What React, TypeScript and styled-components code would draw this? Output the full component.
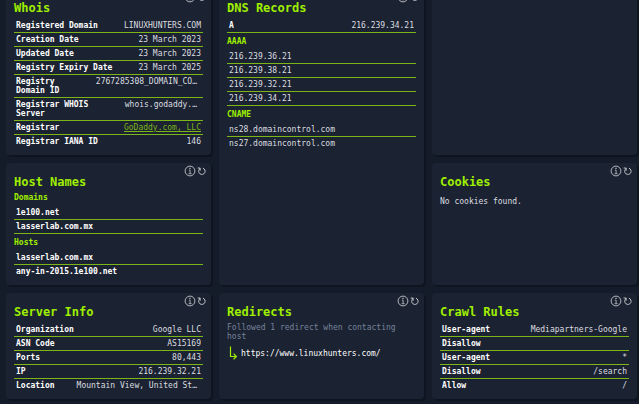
import React from "react";
import styled, { createGlobalStyle } from "styled-components";

const colors = {
  primary: "#9fef00",
  line: "#7cb518",
  background: "#141b29",
  card: "#1b2231",
  shadow: "#0f1520",
  text: "#ffffff",
  value: "#dcdee0",
  muted: "#76829b",
  icon: "#c3c5c8",
};

const GlobalStyle = createGlobalStyle`
  * { box-sizing: border-box; }
  html { background: ${colors.background}; }
  body {
    margin: 0;
    overflow: hidden;
    color: ${colors.text};
    font: 8px/9px "DejaVu Sans Mono", "Liberation Mono", monospace;
  }
`;

const Dashboard = styled.main`
  display: grid;
  grid-template-columns: repeat(3, minmax(0, 1fr));
  gap: 8px;
  margin-top: -11px;
  padding: 0 2px 8px 6px;
`;

const CardBox = styled.section<{ $rows?: number }>`
  position: relative;
  grid-row: span ${(p) => p.$rows ?? 1};
  padding: 13px 8px 7px;
  border-radius: 4px;
  background: ${colors.card};
  box-shadow: 2px 2px 0 ${colors.shadow};
`;

const CardTitle = styled.h2`
  margin: 0;
  color: ${colors.primary};
  font-size: 12px;
  line-height: 13px;
`;

const CardActions = styled.div`
  position: absolute;
  top: 2px;
  right: 4px;
  display: flex;
`;

const IconButton = styled.button`
  display: flex;
  padding: 0;
  border: 0;
  background: none;
  color: ${colors.icon};
  cursor: pointer;
`;

const GroupTitle = styled.h3`
  margin: 0;
  padding: 4px 0;
  color: ${colors.primary};
  font-size: 8px;
  line-height: 9px;
`;

const Pairs = styled.dl`
  margin: 4px 0 0;
`;

const PairRow = styled.div<{ $ruled?: boolean }>`
  display: flex;
  justify-content: space-between;
  gap: 12px;
  padding: 2px;
  border-bottom: 1px solid ${colors.line};

  &:last-child {
    border-bottom-width: ${(p) => (p.$ruled ? "1px" : "0")};
  }
`;

const Label = styled.dt`
  font-weight: bold;
`;

const Value = styled.dd<{ $shortened?: boolean }>`
  flex: none;
  margin: 0;
  padding-right: ${(p) => (p.$shortened ? "4px" : "0")};
  color: ${colors.value};
  white-space: nowrap;
`;

const ValueLink = styled.a`
  color: ${colors.line};
`;

const List = styled.ul<{ $bold?: boolean; $ruled?: boolean }>`
  margin: 0;
  padding: 0;
  list-style: none;
  color: ${(p) => (p.$bold ? colors.text : colors.value)};
  font-weight: ${(p) => (p.$bold ? "bold" : "normal")};

  li {
    padding: 2px;
    border-bottom: 1px solid ${colors.line};
  }

  li:last-child {
    border-bottom-width: ${(p) => (p.$ruled ? "1px" : "0")};
  }
`;

const Note = styled.p<{ $muted?: boolean }>`
  margin: 0;
  padding-top: ${(p) => (p.$muted ? "4px" : "8px")};
  color: ${(p) => (p.$muted ? colors.muted : colors.value)};
`;

const Redirect = styled.div`
  display: flex;
  align-items: center;
  gap: 3px;
  padding: 5px 2px;

  a {
    color: ${colors.text};
    text-decoration: none;
  }
`;

const InfoIcon = () => (
  <svg width="12" height="12" viewBox="0 0 12 12" fill="none" stroke="currentColor" aria-hidden="true">
    <circle cx="6" cy="6" r="4.9" strokeWidth="0.9" />
    <path d="M4.9 5.1h1.2v3.5M4.6 8.7h3" strokeWidth="0.8" />
    <path d="M6 2.8v1.2" strokeWidth="1.2" />
  </svg>
);

const RefreshIcon = () => (
  <svg width="11" height="12" viewBox="0 0 11 12" fill="none" stroke="currentColor" aria-hidden="true">
    <path d="M6.9 3.2A3.2 3.2 0 1 1 3.6 4V3.2" strokeWidth="1" />
    <path d="M1.6 3H4.2V5.8" strokeWidth="0.9" />
  </svg>
);

const RedirectArrow = () => (
  <svg width="9" height="14" viewBox="0 0 9 14" fill="none" stroke={colors.primary} aria-hidden="true">
    <path d="M1.5 0.5V10.5H7M4.6 7.6L7.4 10.5L4.6 13.2" strokeWidth="1.2" />
  </svg>
);

type CardProps = { title: string; rows?: number; children?: React.ReactNode };

const Card = ({ title, rows, children }: CardProps) => (
  <CardBox $rows={rows}>
    <CardActions>
      <IconButton type="button" aria-label={`About ${title}`}>
        <InfoIcon />
      </IconButton>
      <IconButton type="button" aria-label={`Refresh ${title}`}>
        <RefreshIcon />
      </IconButton>
    </CardActions>
    <CardTitle>{title}</CardTitle>
    {children}
  </CardBox>
);

type Pair = [label: string, value: string, href?: string];

const PairList = ({ items, ruled }: { items: Pair[]; ruled?: boolean }) => (
  <Pairs>
    {items.map(([label, value, href], i) => (
      <PairRow key={i} $ruled={ruled}>
        <Label>{label}</Label>
        <Value $shortened={value.endsWith("…")}>
          {href ? <ValueLink href={href}>{value}</ValueLink> : value}
        </Value>
      </PairRow>
    ))}
  </Pairs>
);

type GroupProps = { title: string; items: string[]; bold?: boolean; ruled?: boolean };

const Group = ({ title, items, bold, ruled }: GroupProps) => (
  <>
    <GroupTitle>{title}</GroupTitle>
    <List $bold={bold} $ruled={ruled}>
      {items.map((item) => (
        <li key={item}>{item}</li>
      ))}
    </List>
  </>
);

const whois: Pair[] = [
  ["Registered Domain", "LINUXHUNTERS.COM"],
  ["Creation Date", "23 March 2023"],
  ["Updated Date", "23 March 2023"],
  ["Registry Expiry Date", "23 March 2025"],
  ["Registry Domain ID", "2767285308_DOMAIN_CO…"],
  ["Registrar WHOIS Server", "whois.godaddy.…"],
  ["Registrar", "GoDaddy.com, LLC", "https://www.godaddy.com"],
  ["Registrar IANA ID", "146"],
];

const server: Pair[] = [
  ["Organization", "Google LLC"],
  ["ASN Code", "AS15169"],
  ["Ports", "80,443"],
  ["IP", "216.239.32.21"],
  ["Location", "Mountain View, United St…"],
];

const crawlRules: Pair[] = [
  ["User-agent", "Mediapartners-Google"],
  ["Disallow", ""],
  ["User-agent", "*"],
  ["Disallow", "/search"],
  ["Allow", "/"],
];

export default function App() {
  return (
    <>
      <GlobalStyle />
      <Dashboard>
        <Card title="Whois">
          <PairList items={whois} />
        </Card>
        <Card title="DNS Records" rows={2}>
          <PairList items={[["A", "216.239.34.21"]]} ruled />
          <Group
            title="AAAA"
            items={["216.239.36.21", "216.239.38.21", "216.239.32.21", "216.239.34.21"]}
            ruled
          />
          <Group title="CNAME" items={["ns28.domaincontrol.com", "ns27.domaincontrol.com"]} />
        </Card>
        <CardBox />
        <Card title="Host Names">
          <Group title="Domains" items={["1e100.net", "lasserlab.com.mx"]} bold ruled />
          <Group title="Hosts" items={["lasserlab.com.mx", "any-in-2015.1e100.net"]} bold />
        </Card>
        <Card title="Cookies">
          <Note>No cookies found.</Note>
        </Card>
        <Card title="Server Info">
          <PairList items={server} />
        </Card>
        <Card title="Redirects">
          <Note $muted>Followed 1 redirect when contacting host</Note>
          <Redirect>
            <RedirectArrow />
            <a href="https://www.linuxhunters.com/">https://www.linuxhunters.com/</a>
          </Redirect>
        </Card>
        <Card title="Crawl Rules">
          <PairList items={crawlRules} />
        </Card>
      </Dashboard>
    </>
  );
}
